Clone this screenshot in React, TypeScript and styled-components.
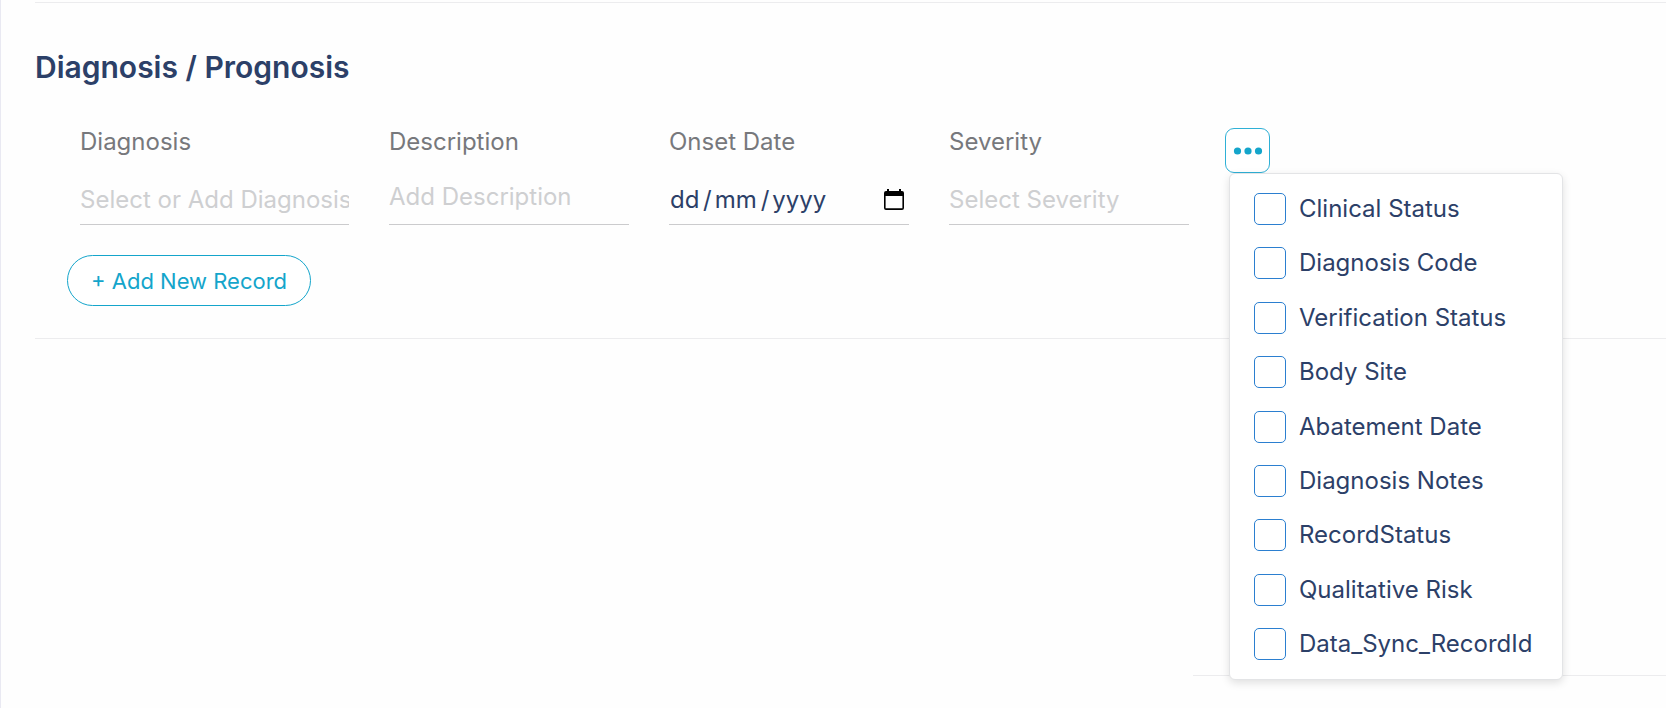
import React, { useState } from "react";
import styled, { createGlobalStyle } from "styled-components";

const GlobalStyle = createGlobalStyle`
  * {
    box-sizing: border-box;
  }

  body {
    margin: 0;
    background: #fefefe;
    color: #2c4068;
    font-family: Inter, "Open Sans", sans-serif;
    font-size: 24px;
    line-height: 32px;
  }

  button,
  input {
    font: inherit;
    color: inherit;
  }
`;

const Page = styled.main`
  min-height: 100vh;
  padding: 2px 0 0 34px;
  border-left: 1px solid #e9e9f2;
`;

const Section = styled.section`
  padding: 44px 0 32px;
  border-top: 1px solid #ececee;
  border-bottom: 1px solid #ececee;
`;

const Heading = styled.h2`
  margin: 0;
  font-size: 30px;
  line-height: 40px;
  font-weight: 600;
`;

const Fields = styled.div`
  display: flex;
  align-items: flex-start;
  gap: 40px;
  padding: 39px 45px 0;
`;

const Field = styled.div<{ $width: number }>`
  flex: 0 1 ${(p) => p.$width}px;
  min-width: 0;
`;

const Label = styled.label`
  display: block;
  color: #77787c;
`;

const Control = styled.div<{ $raised?: boolean }>`
  display: flex;
  align-items: center;
  height: 67px;
  padding-top: ${(p) => (p.$raised ? 11 : 17)}px;
  border-bottom: 1px solid #cbcbcd;
`;

const TextInput = styled.input`
  flex: 1;
  width: 100%;
  min-width: 0;
  height: 32px;
  padding: 0;
  border: 0;
  outline: 0;
  background: transparent;

  &::placeholder {
    color: #cecfd1;
    opacity: 1;
  }
`;

const DateParts = styled.div`
  display: flex;
  flex: 1;
  gap: 3px;
  padding-left: 1px;
`;

const DatePart = styled.input<{ $width: number }>`
  width: ${(p) => p.$width}px;
  height: 32px;
  padding: 0;
  border: 0;
  outline: 0;
  background: transparent;

  &::placeholder {
    color: #2c4068;
    opacity: 1;
  }
`;

const IconButton = styled.button`
  display: flex;
  padding: 0 5px;
  border: 0;
  background: none;
  color: #000;
`;

const MoreWrap = styled.div`
  position: relative;
  flex: none;
  margin: 2px 0 0 -4px;
`;

const MoreButton = styled.button`
  display: flex;
  align-items: center;
  justify-content: center;
  width: 45px;
  height: 45px;
  padding: 0;
  border: 1px solid #2fb0d6;
  border-radius: 9px;
  background: #fff;
  color: #14a5cb;
`;

const Menu = styled.ul`
  position: absolute;
  top: 45px;
  left: 4px;
  z-index: 1;
  display: flex;
  flex-direction: column;
  justify-content: space-between;
  width: 334px;
  height: 507px;
  margin: 0;
  padding: 19px 24px;
  list-style: none;
  border: 1px solid #e3e4e6;
  border-radius: 6px;
  background: #fff;
  box-shadow: 0 3px 8px rgba(0, 0, 0, 0.12);
`;

const Option = styled.label`
  display: flex;
  align-items: center;
  gap: 13px;
  white-space: nowrap;
`;

const Checkbox = styled.input`
  appearance: none;
  flex: none;
  width: 32px;
  height: 32px;
  margin: 0;
  border: 1px solid #2b7fd0;
  border-radius: 5px;
  background: #fff;

  &:checked {
    background: #2b7fd0;
    box-shadow: inset 0 0 0 5px #fff;
  }
`;

const AddButton = styled.button`
  display: block;
  height: 51px;
  margin: 30px 0 0 32px;
  padding: 0 23px;
  border: 1px solid #14a5cb;
  border-radius: 26px;
  background: #fff;
  color: #14a5cb;
  font-size: 22px;
`;

const NextSection = styled.section`
  height: 337px;
  margin-left: 1158px;
  border-bottom: 1px solid #ececee;
`;

const CalendarIcon = () => (
  <svg width="20" height="22" viewBox="0 0 20 22" aria-hidden="true">
    <path
      fill="currentColor"
      fillRule="evenodd"
      d="M3 0h2v2h10V0h2v2h1a2 2 0 0 1 2 2v15a2 2 0 0 1-2 2H2a2 2 0 0 1-2-2V4a2 2 0 0 1 2-2h1zM1.6 7v12.2h16.8V7z"
    />
  </svg>
);

const DotsIcon = () => (
  <svg width="30" height="8" viewBox="0 0 30 8" fill="currentColor" aria-hidden="true">
    <circle cx="4.5" cy="4" r="3.6" />
    <circle cx="15" cy="4" r="3.6" />
    <circle cx="25.5" cy="4" r="3.6" />
  </svg>
);

const columns = [
  "Clinical Status",
  "Diagnosis Code",
  "Verification Status",
  "Body Site",
  "Abatement Date",
  "Diagnosis Notes",
  "RecordStatus",
  "Qualitative Risk",
  "Data_Sync_RecordId",
];

export default function App() {
  const [open, setOpen] = useState(true);

  return (
    <>
      <GlobalStyle />
      <Page>
        <Section>
          <Heading>Diagnosis / Prognosis</Heading>
          <Fields>
            <Field $width={269}>
              <Label htmlFor="diagnosis">Diagnosis</Label>
              <Control>
                <TextInput id="diagnosis" placeholder="Select or Add Diagnosis" />
              </Control>
            </Field>
            <Field $width={240}>
              <Label htmlFor="description">Description</Label>
              <Control $raised>
                <TextInput id="description" placeholder="Add Description" />
              </Control>
            </Field>
            <Field $width={240}>
              <Label htmlFor="onset-day">Onset Date</Label>
              <Control>
                <DateParts>
                  <DatePart id="onset-day" $width={30} maxLength={2} placeholder="dd" />
                  <span>/</span>
                  <DatePart $width={43} maxLength={2} placeholder="mm" aria-label="Onset month" />
                  <span>/</span>
                  <DatePart $width={58} maxLength={4} placeholder="yyyy" aria-label="Onset year" />
                </DateParts>
                <IconButton type="button" aria-label="Choose date">
                  <CalendarIcon />
                </IconButton>
              </Control>
            </Field>
            <Field $width={240}>
              <Label htmlFor="severity">Severity</Label>
              <Control>
                <TextInput id="severity" placeholder="Select Severity" />
              </Control>
            </Field>
            <MoreWrap>
              <MoreButton
                type="button"
                aria-label="More fields"
                aria-expanded={open}
                onClick={() => setOpen(!open)}
              >
                <DotsIcon />
              </MoreButton>
              {open && (
                <Menu>
                  {columns.map((name) => (
                    <li key={name}>
                      <Option>
                        <Checkbox type="checkbox" />
                        {name}
                      </Option>
                    </li>
                  ))}
                </Menu>
              )}
            </MoreWrap>
          </Fields>
          <AddButton type="button">+ Add New Record</AddButton>
        </Section>
        <NextSection />
      </Page>
    </>
  );
}
